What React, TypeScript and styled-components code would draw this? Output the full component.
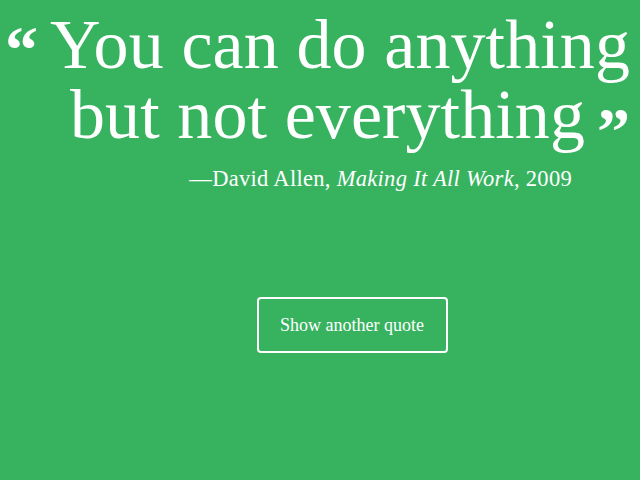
import * as React from 'react';
import styled, { createGlobalStyle } from 'styled-components';

const GlobalStyle = createGlobalStyle`
  html, body {
    margin: 0;
    padding: 0;
    background: #37b35f;
  }
  * {
    box-sizing: border-box;
  }
`;

const Page = styled('main')`
  width: 640px;
  height: 480px;
  overflow: hidden;
  background: #37b35f;
  color: #ffffff;
  font-family: 'Liberation Serif', 'Times New Roman', serif;
`;

const Quote = styled('blockquote')`
  margin: 0;
  padding: 10px 10px 0 0;
  text-align: right;
  font-size: 70px;
  line-height: 70px;
  letter-spacing: 0.1px;
  white-space: nowrap;
`;

const Mark = styled('span')<{ $drop: number; $side: 'left' | 'right' }>`
  font-weight: bold;
  font-size: 66px;
  line-height: 0;
  letter-spacing: 0;
  vertical-align: ${(p) => -p.$drop}px;
  margin: ${(p) => (p.$side === 'left' ? '0 12px 0 0' : '0 0 0 12px')};
`;

const Cite = styled('p')`
  margin: 16px 68px 0 0;
  text-align: right;
  font-size: 22.5px;
  letter-spacing: 0.3px;

  em {
    font-style: italic;
  }
`;

const Actions = styled('div')`
  display: flex;
  justify-content: center;
  padding-left: 64px;
  margin-top: 105px;
`;

const Button = styled('button')`
  width: 191px;
  height: 56px;
  background: transparent;
  border: 2px solid #ffffff;
  border-radius: 4px;
  color: #ffffff;
  font-family: 'Liberation Serif', 'Times New Roman', serif;
  font-size: 18px;
  cursor: pointer;
`;

export default function App() {
  return (
    <Page>
      <GlobalStyle />
      <Quote>
        <Mark $drop={4} $side="left">“</Mark>You can do anything
        <br />
        but not everything<Mark $drop={15} $side="right">”</Mark>
      </Quote>
      <Cite>
        —David Allen, <em>Making It All Work</em>, 2009
      </Cite>
      <Actions>
        <Button>Show another quote</Button>
      </Actions>
    </Page>
  );
}
